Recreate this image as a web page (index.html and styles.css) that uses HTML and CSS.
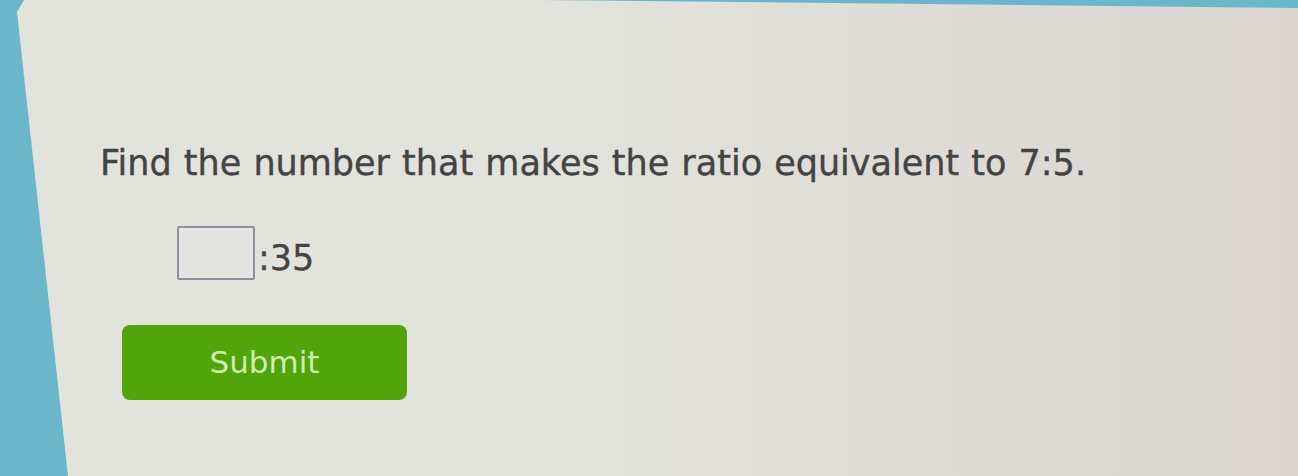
FILE: index.html
```html
<!DOCTYPE html>
<html lang="en">
<head>
<meta charset="utf-8">
<title>Ratio question</title>
<link rel="stylesheet" href="styles.css">
</head>
<body>
<main class="card">
  <p class="question">Find the number that makes the ratio equivalent to <span class="ratio">7:5</span>.</p>
  <div class="answer-row">
    <input class="answer-box" type="text" aria-label="answer">
    <span class="ratio-rest">:35</span>
  </div>
  <button class="submit" type="button">Submit</button>
</main>
</body>
</html>
```
FILE: styles.css
```css
html, body {
  margin: 0;
  height: 100%;
}
body {
  background: #6cb6cc;
  font-family: "DejaVu Sans", Verdana, sans-serif;
  overflow: hidden;
}
.card {
  box-sizing: border-box;
  height: 476px;
  padding: 143px 0 0 100px;
  background: linear-gradient(90deg, #e3e3de 0%, #e2e2dc 45%, #ddd9d4 80%, #dbd6d2 100%);
  clip-path: polygon(24px 0, 540px 0, 1298px 8px, 1298px 476px, 68px 476px, 17px 12px);
  display: flex;
  flex-direction: column;
  align-items: flex-start;
}
.question {
  margin: 0;
  font-size: 35px;
  line-height: 40px;
  word-spacing: 1px;
  color: #444;
  -webkit-text-stroke: 0.4px #444;
  white-space: nowrap;
}
.answer-row {
  display: flex;
  align-items: flex-start;
  margin: 43px 0 0 77px;
}
.answer-box {
  box-sizing: border-box;
  width: 78px;
  height: 54px;
  margin: 0;
  padding: 0;
  border: 2px solid #8a93a1;
  border-radius: 2px;
  background: #e4e4e0;
}
.ratio-rest {
  margin: 12px 0 0 3px;
  font-size: 35px;
  line-height: 40px;
  color: #444;
  -webkit-text-stroke: 0.3px #444;
}
.submit {
  margin: 45px 0 0 22px;
  width: 285px;
  height: 75px;
  border: none;
  border-radius: 8px;
  background: #52a40b;
  color: #cdeeae;
  font-family: "DejaVu Sans", Verdana, sans-serif;
  font-size: 31px;
  padding: 0 0 2px 0;
}
```
